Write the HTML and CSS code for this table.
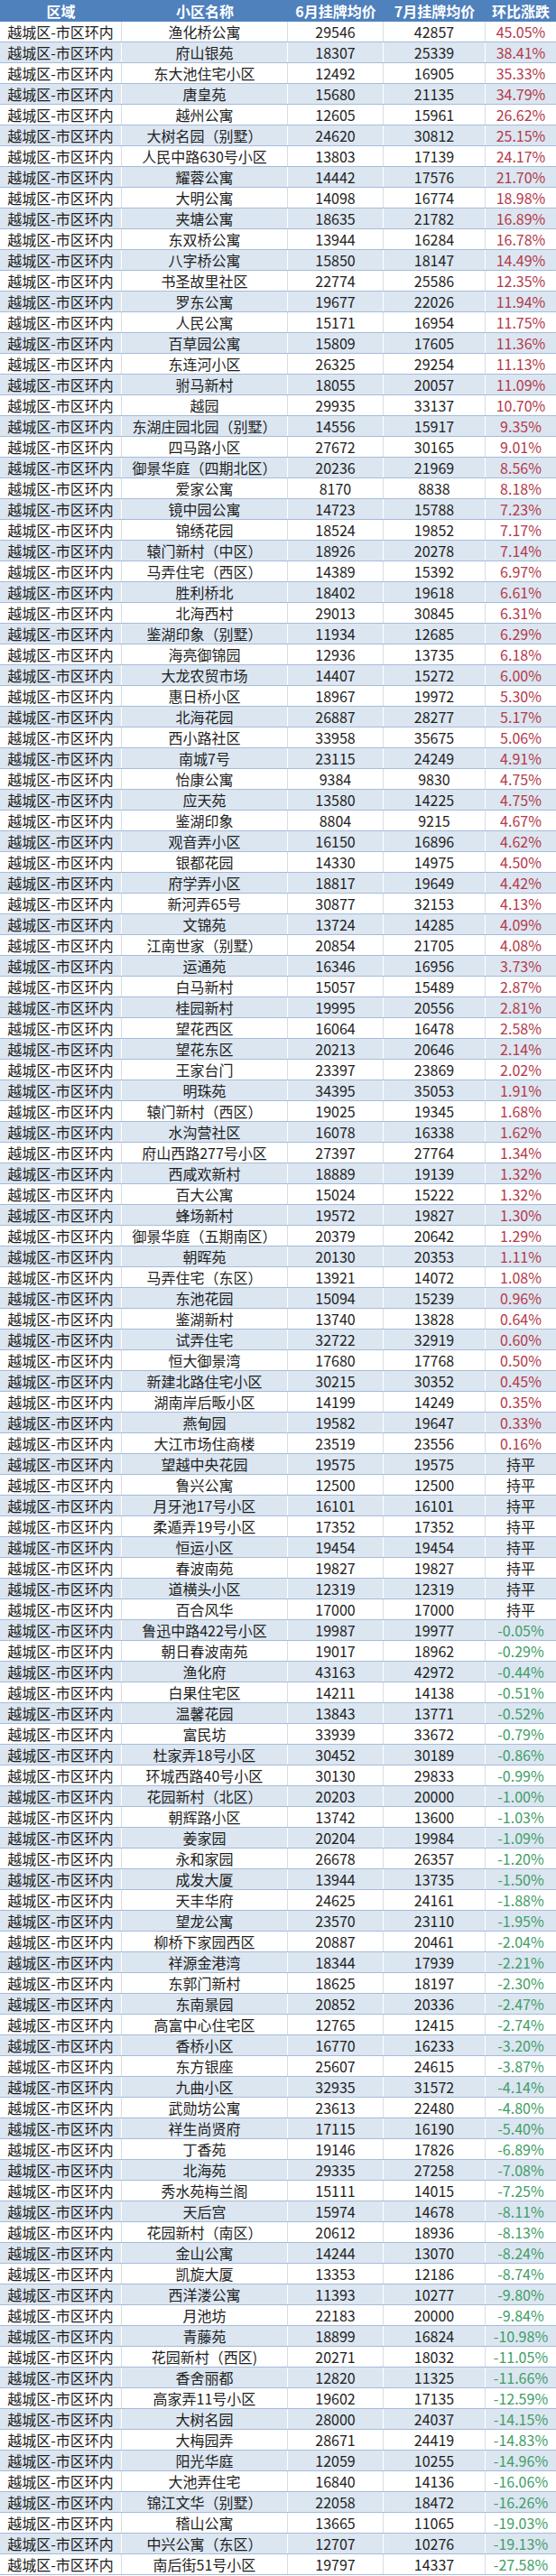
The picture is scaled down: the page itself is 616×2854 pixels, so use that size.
FILE: index.html
```html
<!DOCTYPE html>
<html lang="zh-CN">
<head>
<meta charset="utf-8">
<title>越城区-市区环内 7月挂牌均价</title>
<link rel="stylesheet" href="styles.css">
</head>
<body>
<div class="sheet">
  <div class="head"><span>区域</span><span>小区名称</span><span>6月挂牌均价</span><span>7月挂牌均价</span><span>环比涨跌</span></div>
  <div class="rows">
    <div class="row"><span>越城区-市区环内</span><span>渔化桥公寓</span><span>29546</span><span>42857</span><span class="up">45.05%</span></div>
    <div class="row"><span>越城区-市区环内</span><span>府山银苑</span><span>18307</span><span>25339</span><span class="up">38.41%</span></div>
    <div class="row"><span>越城区-市区环内</span><span>东大池住宅小区</span><span>12492</span><span>16905</span><span class="up">35.33%</span></div>
    <div class="row"><span>越城区-市区环内</span><span>唐皇苑</span><span>15680</span><span>21135</span><span class="up">34.79%</span></div>
    <div class="row"><span>越城区-市区环内</span><span>越州公寓</span><span>12605</span><span>15961</span><span class="up">26.62%</span></div>
    <div class="row"><span>越城区-市区环内</span><span>大树名园（别墅）</span><span>24620</span><span>30812</span><span class="up">25.15%</span></div>
    <div class="row"><span>越城区-市区环内</span><span>人民中路630号小区</span><span>13803</span><span>17139</span><span class="up">24.17%</span></div>
    <div class="row"><span>越城区-市区环内</span><span>耀蓉公寓</span><span>14442</span><span>17576</span><span class="up">21.70%</span></div>
    <div class="row"><span>越城区-市区环内</span><span>大明公寓</span><span>14098</span><span>16774</span><span class="up">18.98%</span></div>
    <div class="row"><span>越城区-市区环内</span><span>夹塘公寓</span><span>18635</span><span>21782</span><span class="up">16.89%</span></div>
    <div class="row"><span>越城区-市区环内</span><span>东双桥公寓</span><span>13944</span><span>16284</span><span class="up">16.78%</span></div>
    <div class="row"><span>越城区-市区环内</span><span>八字桥公寓</span><span>15850</span><span>18147</span><span class="up">14.49%</span></div>
    <div class="row"><span>越城区-市区环内</span><span>书圣故里社区</span><span>22774</span><span>25586</span><span class="up">12.35%</span></div>
    <div class="row"><span>越城区-市区环内</span><span>罗东公寓</span><span>19677</span><span>22026</span><span class="up">11.94%</span></div>
    <div class="row"><span>越城区-市区环内</span><span>人民公寓</span><span>15171</span><span>16954</span><span class="up">11.75%</span></div>
    <div class="row"><span>越城区-市区环内</span><span>百草园公寓</span><span>15809</span><span>17605</span><span class="up">11.36%</span></div>
    <div class="row"><span>越城区-市区环内</span><span>东连河小区</span><span>26325</span><span>29254</span><span class="up">11.13%</span></div>
    <div class="row"><span>越城区-市区环内</span><span>驸马新村</span><span>18055</span><span>20057</span><span class="up">11.09%</span></div>
    <div class="row"><span>越城区-市区环内</span><span>越园</span><span>29935</span><span>33137</span><span class="up">10.70%</span></div>
    <div class="row"><span>越城区-市区环内</span><span>东湖庄园北园（别墅）</span><span>14556</span><span>15917</span><span class="up">9.35%</span></div>
    <div class="row"><span>越城区-市区环内</span><span>四马路小区</span><span>27672</span><span>30165</span><span class="up">9.01%</span></div>
    <div class="row"><span>越城区-市区环内</span><span>御景华庭（四期北区）</span><span>20236</span><span>21969</span><span class="up">8.56%</span></div>
    <div class="row"><span>越城区-市区环内</span><span>爱家公寓</span><span>8170</span><span>8838</span><span class="up">8.18%</span></div>
    <div class="row"><span>越城区-市区环内</span><span>镜中园公寓</span><span>14723</span><span>15788</span><span class="up">7.23%</span></div>
    <div class="row"><span>越城区-市区环内</span><span>锦绣花园</span><span>18524</span><span>19852</span><span class="up">7.17%</span></div>
    <div class="row"><span>越城区-市区环内</span><span>辕门新村（中区）</span><span>18926</span><span>20278</span><span class="up">7.14%</span></div>
    <div class="row"><span>越城区-市区环内</span><span>马弄住宅（西区）</span><span>14389</span><span>15392</span><span class="up">6.97%</span></div>
    <div class="row"><span>越城区-市区环内</span><span>胜利桥北</span><span>18402</span><span>19618</span><span class="up">6.61%</span></div>
    <div class="row"><span>越城区-市区环内</span><span>北海西村</span><span>29013</span><span>30845</span><span class="up">6.31%</span></div>
    <div class="row"><span>越城区-市区环内</span><span>鉴湖印象（别墅）</span><span>11934</span><span>12685</span><span class="up">6.29%</span></div>
    <div class="row"><span>越城区-市区环内</span><span>海亮御锦园</span><span>12936</span><span>13735</span><span class="up">6.18%</span></div>
    <div class="row"><span>越城区-市区环内</span><span>大龙农贸市场</span><span>14407</span><span>15272</span><span class="up">6.00%</span></div>
    <div class="row"><span>越城区-市区环内</span><span>惠日桥小区</span><span>18967</span><span>19972</span><span class="up">5.30%</span></div>
    <div class="row"><span>越城区-市区环内</span><span>北海花园</span><span>26887</span><span>28277</span><span class="up">5.17%</span></div>
    <div class="row"><span>越城区-市区环内</span><span>西小路社区</span><span>33958</span><span>35675</span><span class="up">5.06%</span></div>
    <div class="row"><span>越城区-市区环内</span><span>南城7号</span><span>23115</span><span>24249</span><span class="up">4.91%</span></div>
    <div class="row"><span>越城区-市区环内</span><span>怡康公寓</span><span>9384</span><span>9830</span><span class="up">4.75%</span></div>
    <div class="row"><span>越城区-市区环内</span><span>应天苑</span><span>13580</span><span>14225</span><span class="up">4.75%</span></div>
    <div class="row"><span>越城区-市区环内</span><span>鉴湖印象</span><span>8804</span><span>9215</span><span class="up">4.67%</span></div>
    <div class="row"><span>越城区-市区环内</span><span>观音弄小区</span><span>16150</span><span>16896</span><span class="up">4.62%</span></div>
    <div class="row"><span>越城区-市区环内</span><span>银都花园</span><span>14330</span><span>14975</span><span class="up">4.50%</span></div>
    <div class="row"><span>越城区-市区环内</span><span>府学弄小区</span><span>18817</span><span>19649</span><span class="up">4.42%</span></div>
    <div class="row"><span>越城区-市区环内</span><span>新河弄65号</span><span>30877</span><span>32153</span><span class="up">4.13%</span></div>
    <div class="row"><span>越城区-市区环内</span><span>文锦苑</span><span>13724</span><span>14285</span><span class="up">4.09%</span></div>
    <div class="row"><span>越城区-市区环内</span><span>江南世家（别墅）</span><span>20854</span><span>21705</span><span class="up">4.08%</span></div>
    <div class="row"><span>越城区-市区环内</span><span>运通苑</span><span>16346</span><span>16956</span><span class="up">3.73%</span></div>
    <div class="row"><span>越城区-市区环内</span><span>白马新村</span><span>15057</span><span>15489</span><span class="up">2.87%</span></div>
    <div class="row"><span>越城区-市区环内</span><span>桂园新村</span><span>19995</span><span>20556</span><span class="up">2.81%</span></div>
    <div class="row"><span>越城区-市区环内</span><span>望花西区</span><span>16064</span><span>16478</span><span class="up">2.58%</span></div>
    <div class="row"><span>越城区-市区环内</span><span>望花东区</span><span>20213</span><span>20646</span><span class="up">2.14%</span></div>
    <div class="row"><span>越城区-市区环内</span><span>王家台门</span><span>23397</span><span>23869</span><span class="up">2.02%</span></div>
    <div class="row"><span>越城区-市区环内</span><span>明珠苑</span><span>34395</span><span>35053</span><span class="up">1.91%</span></div>
    <div class="row"><span>越城区-市区环内</span><span>辕门新村（西区）</span><span>19025</span><span>19345</span><span class="up">1.68%</span></div>
    <div class="row"><span>越城区-市区环内</span><span>水沟营社区</span><span>16078</span><span>16338</span><span class="up">1.62%</span></div>
    <div class="row"><span>越城区-市区环内</span><span>府山西路277号小区</span><span>27397</span><span>27764</span><span class="up">1.34%</span></div>
    <div class="row"><span>越城区-市区环内</span><span>西咸欢新村</span><span>18889</span><span>19139</span><span class="up">1.32%</span></div>
    <div class="row"><span>越城区-市区环内</span><span>百大公寓</span><span>15024</span><span>15222</span><span class="up">1.32%</span></div>
    <div class="row"><span>越城区-市区环内</span><span>蜂场新村</span><span>19572</span><span>19827</span><span class="up">1.30%</span></div>
    <div class="row"><span>越城区-市区环内</span><span>御景华庭（五期南区）</span><span>20379</span><span>20642</span><span class="up">1.29%</span></div>
    <div class="row"><span>越城区-市区环内</span><span>朝晖苑</span><span>20130</span><span>20353</span><span class="up">1.11%</span></div>
    <div class="row"><span>越城区-市区环内</span><span>马弄住宅（东区）</span><span>13921</span><span>14072</span><span class="up">1.08%</span></div>
    <div class="row"><span>越城区-市区环内</span><span>东池花园</span><span>15094</span><span>15239</span><span class="up">0.96%</span></div>
    <div class="row"><span>越城区-市区环内</span><span>鉴湖新村</span><span>13740</span><span>13828</span><span class="up">0.64%</span></div>
    <div class="row"><span>越城区-市区环内</span><span>试弄住宅</span><span>32722</span><span>32919</span><span class="up">0.60%</span></div>
    <div class="row"><span>越城区-市区环内</span><span>恒大御景湾</span><span>17680</span><span>17768</span><span class="up">0.50%</span></div>
    <div class="row"><span>越城区-市区环内</span><span>新建北路住宅小区</span><span>30215</span><span>30352</span><span class="up">0.45%</span></div>
    <div class="row"><span>越城区-市区环内</span><span>湖南岸后畈小区</span><span>14199</span><span>14249</span><span class="up">0.35%</span></div>
    <div class="row"><span>越城区-市区环内</span><span>燕甸园</span><span>19582</span><span>19647</span><span class="up">0.33%</span></div>
    <div class="row"><span>越城区-市区环内</span><span>大江市场住商楼</span><span>23519</span><span>23556</span><span class="up">0.16%</span></div>
    <div class="row"><span>越城区-市区环内</span><span>望越中央花园</span><span>19575</span><span>19575</span><span>持平</span></div>
    <div class="row"><span>越城区-市区环内</span><span>鲁兴公寓</span><span>12500</span><span>12500</span><span>持平</span></div>
    <div class="row"><span>越城区-市区环内</span><span>月牙池17号小区</span><span>16101</span><span>16101</span><span>持平</span></div>
    <div class="row"><span>越城区-市区环内</span><span>柔遁弄19号小区</span><span>17352</span><span>17352</span><span>持平</span></div>
    <div class="row"><span>越城区-市区环内</span><span>恒运小区</span><span>19454</span><span>19454</span><span>持平</span></div>
    <div class="row"><span>越城区-市区环内</span><span>春波南苑</span><span>19827</span><span>19827</span><span>持平</span></div>
    <div class="row"><span>越城区-市区环内</span><span>道横头小区</span><span>12319</span><span>12319</span><span>持平</span></div>
    <div class="row"><span>越城区-市区环内</span><span>百合风华</span><span>17000</span><span>17000</span><span>持平</span></div>
    <div class="row"><span>越城区-市区环内</span><span>鲁迅中路422号小区</span><span>19987</span><span>19977</span><span class="down">-0.05%</span></div>
    <div class="row"><span>越城区-市区环内</span><span>朝日春波南苑</span><span>19017</span><span>18962</span><span class="down">-0.29%</span></div>
    <div class="row"><span>越城区-市区环内</span><span>渔化府</span><span>43163</span><span>42972</span><span class="down">-0.44%</span></div>
    <div class="row"><span>越城区-市区环内</span><span>白果住宅区</span><span>14211</span><span>14138</span><span class="down">-0.51%</span></div>
    <div class="row"><span>越城区-市区环内</span><span>温馨花园</span><span>13843</span><span>13771</span><span class="down">-0.52%</span></div>
    <div class="row"><span>越城区-市区环内</span><span>富民坊</span><span>33939</span><span>33672</span><span class="down">-0.79%</span></div>
    <div class="row"><span>越城区-市区环内</span><span>杜家弄18号小区</span><span>30452</span><span>30189</span><span class="down">-0.86%</span></div>
    <div class="row"><span>越城区-市区环内</span><span>环城西路40号小区</span><span>30130</span><span>29833</span><span class="down">-0.99%</span></div>
    <div class="row"><span>越城区-市区环内</span><span>花园新村（北区）</span><span>20203</span><span>20000</span><span class="down">-1.00%</span></div>
    <div class="row"><span>越城区-市区环内</span><span>朝辉路小区</span><span>13742</span><span>13600</span><span class="down">-1.03%</span></div>
    <div class="row"><span>越城区-市区环内</span><span>姜家园</span><span>20204</span><span>19984</span><span class="down">-1.09%</span></div>
    <div class="row"><span>越城区-市区环内</span><span>永和家园</span><span>26678</span><span>26357</span><span class="down">-1.20%</span></div>
    <div class="row"><span>越城区-市区环内</span><span>成发大厦</span><span>13944</span><span>13735</span><span class="down">-1.50%</span></div>
    <div class="row"><span>越城区-市区环内</span><span>天丰华府</span><span>24625</span><span>24161</span><span class="down">-1.88%</span></div>
    <div class="row"><span>越城区-市区环内</span><span>望龙公寓</span><span>23570</span><span>23110</span><span class="down">-1.95%</span></div>
    <div class="row"><span>越城区-市区环内</span><span>柳桥下家园西区</span><span>20887</span><span>20461</span><span class="down">-2.04%</span></div>
    <div class="row"><span>越城区-市区环内</span><span>祥源金港湾</span><span>18344</span><span>17939</span><span class="down">-2.21%</span></div>
    <div class="row"><span>越城区-市区环内</span><span>东郭门新村</span><span>18625</span><span>18197</span><span class="down">-2.30%</span></div>
    <div class="row"><span>越城区-市区环内</span><span>东南景园</span><span>20852</span><span>20336</span><span class="down">-2.47%</span></div>
    <div class="row"><span>越城区-市区环内</span><span>高富中心住宅区</span><span>12765</span><span>12415</span><span class="down">-2.74%</span></div>
    <div class="row"><span>越城区-市区环内</span><span>香桥小区</span><span>16770</span><span>16233</span><span class="down">-3.20%</span></div>
    <div class="row"><span>越城区-市区环内</span><span>东方银座</span><span>25607</span><span>24615</span><span class="down">-3.87%</span></div>
    <div class="row"><span>越城区-市区环内</span><span>九曲小区</span><span>32935</span><span>31572</span><span class="down">-4.14%</span></div>
    <div class="row"><span>越城区-市区环内</span><span>武勋坊公寓</span><span>23613</span><span>22480</span><span class="down">-4.80%</span></div>
    <div class="row"><span>越城区-市区环内</span><span>祥生尚贤府</span><span>17115</span><span>16190</span><span class="down">-5.40%</span></div>
    <div class="row"><span>越城区-市区环内</span><span>丁香苑</span><span>19146</span><span>17826</span><span class="down">-6.89%</span></div>
    <div class="row"><span>越城区-市区环内</span><span>北海苑</span><span>29335</span><span>27258</span><span class="down">-7.08%</span></div>
    <div class="row"><span>越城区-市区环内</span><span>秀水苑梅兰阁</span><span>15111</span><span>14015</span><span class="down">-7.25%</span></div>
    <div class="row"><span>越城区-市区环内</span><span>天后宫</span><span>15974</span><span>14678</span><span class="down">-8.11%</span></div>
    <div class="row"><span>越城区-市区环内</span><span>花园新村（南区）</span><span>20612</span><span>18936</span><span class="down">-8.13%</span></div>
    <div class="row"><span>越城区-市区环内</span><span>金山公寓</span><span>14244</span><span>13070</span><span class="down">-8.24%</span></div>
    <div class="row"><span>越城区-市区环内</span><span>凯旋大厦</span><span>13353</span><span>12186</span><span class="down">-8.74%</span></div>
    <div class="row"><span>越城区-市区环内</span><span>西洋溇公寓</span><span>11393</span><span>10277</span><span class="down">-9.80%</span></div>
    <div class="row"><span>越城区-市区环内</span><span>月池坊</span><span>22183</span><span>20000</span><span class="down">-9.84%</span></div>
    <div class="row"><span>越城区-市区环内</span><span>青藤苑</span><span>18899</span><span>16824</span><span class="down">-10.98%</span></div>
    <div class="row"><span>越城区-市区环内</span><span>花园新村（西区)</span><span>20271</span><span>18032</span><span class="down">-11.05%</span></div>
    <div class="row"><span>越城区-市区环内</span><span>香舍丽都</span><span>12820</span><span>11325</span><span class="down">-11.66%</span></div>
    <div class="row"><span>越城区-市区环内</span><span>高家弄11号小区</span><span>19602</span><span>17135</span><span class="down">-12.59%</span></div>
    <div class="row"><span>越城区-市区环内</span><span>大树名园</span><span>28000</span><span>24037</span><span class="down">-14.15%</span></div>
    <div class="row"><span>越城区-市区环内</span><span>大梅园弄</span><span>28671</span><span>24419</span><span class="down">-14.83%</span></div>
    <div class="row"><span>越城区-市区环内</span><span>阳光华庭</span><span>12059</span><span>10255</span><span class="down">-14.96%</span></div>
    <div class="row"><span>越城区-市区环内</span><span>大池弄住宅</span><span>16840</span><span>14136</span><span class="down">-16.06%</span></div>
    <div class="row"><span>越城区-市区环内</span><span>锦江文华（别墅）</span><span>22058</span><span>18472</span><span class="down">-16.26%</span></div>
    <div class="row"><span>越城区-市区环内</span><span>稽山公寓</span><span>13665</span><span>11065</span><span class="down">-19.03%</span></div>
    <div class="row"><span>越城区-市区环内</span><span>中兴公寓（东区）</span><span>12707</span><span>10276</span><span class="down">-19.13%</span></div>
    <div class="row"><span>越城区-市区环内</span><span>南后街51号小区</span><span>19797</span><span>14337</span><span class="down">-27.58%</span></div>
  </div>
</div>
</body>
</html>
```

FILE: styles.css
```css
html, body {
  margin: 0;
  padding: 0;
  background: #ffffff;
}

body {
  font-family: "Noto Sans CJK SC", "Liberation Sans", sans-serif;
  font-size: 16px;
  color: #1e1e1e;
}

.sheet {
  width: 616px;
}

.head,
.row {
  display: grid;
  grid-template-columns: 135px 184px 106px 113px 78px;
}

.head {
  height: 24px;
  background: #4f81bd;
  color: #ffffff;
  font-weight: 700;
}

.head span,
.row span {
  display: flex;
  align-items: center;
  justify-content: center;
  white-space: nowrap;
  line-height: 22px;
}

.row {
  height: 23px;
  box-sizing: border-box;
  border-bottom: 1px solid #a5bcd9;
  background: #ffffff;
}

.row:nth-child(even) {
  background: #dce6f1;
}

.row span {
  border-right: 1px solid #d6dde8;
}

.row:nth-child(even) span {
  border-right-color: #ffffff;
}

.row span:last-child {
  border-right: none;
}

.up {
  color: #b5394a;
}

.down {
  color: #3f9e68;
}
```
